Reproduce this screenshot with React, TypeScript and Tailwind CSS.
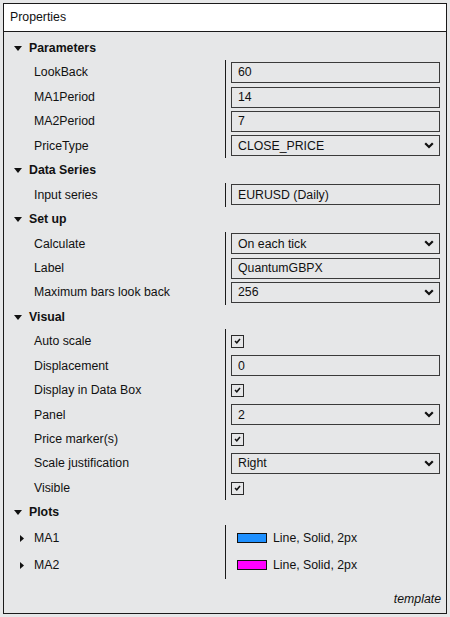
import React from "react";

type Prop =
  | { label: string; kind: "text"; value: string }
  | { label: string; kind: "select"; value: string }
  | { label: string; kind: "check" };

interface Section {
  title: string;
  props: Prop[];
}

const sections: Section[] = [
  {
    title: "Parameters",
    props: [
      { label: "LookBack", kind: "text", value: "60" },
      { label: "MA1Period", kind: "text", value: "14" },
      { label: "MA2Period", kind: "text", value: "7" },
      { label: "PriceType", kind: "select", value: "CLOSE_PRICE" },
    ],
  },
  {
    title: "Data Series",
    props: [{ label: "Input series", kind: "text", value: "EURUSD (Daily)" }],
  },
  {
    title: "Set up",
    props: [
      { label: "Calculate", kind: "select", value: "On each tick" },
      { label: "Label", kind: "text", value: "QuantumGBPX" },
      { label: "Maximum bars look back", kind: "select", value: "256" },
    ],
  },
  {
    title: "Visual",
    props: [
      { label: "Auto scale", kind: "check" },
      { label: "Displacement", kind: "text", value: "0" },
      { label: "Display in Data Box", kind: "check" },
      { label: "Panel", kind: "select", value: "2" },
      { label: "Price marker(s)", kind: "check" },
      { label: "Scale justification", kind: "select", value: "Right" },
      { label: "Visible", kind: "check" },
    ],
  },
];

const plots = [
  { name: "MA1", color: "bg-[#1e90ff]" },
  { name: "MA2", color: "bg-[#ff00ff]" },
];

function DownTriangle() {
  return (
    <svg width="8" height="5" viewBox="0 0 8 5" className="block">
      <polygon points="0,0 8,0 4,5" fill="#111" />
    </svg>
  );
}

function RightTriangle() {
  return (
    <svg width="4" height="7" viewBox="0 0 4 7" className="block">
      <polygon points="0,0 4,3.5 0,7" fill="#111" />
    </svg>
  );
}

function Chevron() {
  return (
    <svg width="10" height="7" viewBox="0 0 10 7" className="block">
      <polyline points="1.2,1.2 5,5 8.8,1.2" fill="none" stroke="#111" strokeWidth="2.2" />
    </svg>
  );
}

function CheckBox() {
  return (
    <div className="flex h-[13px] w-[13px] items-center justify-center border border-[#2a2a2a]">
      <svg width="7" height="6" viewBox="0 0 7 6" className="block">
        <polyline points="1,3 2.8,4.8 6,1" fill="none" stroke="#111" strokeWidth="1.5" />
      </svg>
    </div>
  );
}

function Value({ prop }: { prop: Prop }) {
  if (prop.kind === "check") {
    return <CheckBox />;
  }
  return (
    <div className="flex h-[21px] w-[209px] items-center justify-between border border-[#3a3a3a] pl-[6px] pr-[5px]">
      <span>{prop.value}</span>
      {prop.kind === "select" && <Chevron />}
    </div>
  );
}

function SectionHeader({ title }: { title: string }) {
  return (
    <div className="flex h-[24.45px] items-center">
      <div className="flex w-[25px] justify-end pr-[7px]">
        <DownTriangle />
      </div>
      <span className="font-bold">{title}</span>
    </div>
  );
}

export default function App() {
  return (
    <div
      className="h-[617px] w-[450px] bg-[#e6e7e8] p-[3px] text-[12.3px] text-[#111]"
      style={{ fontFamily: '"Liberation Sans", Arial, sans-serif' }}
    >
      <div className="flex h-[611px] w-[444px] flex-col border border-[#1a1a1a]">
        <div className="flex h-[28px] items-center border-b border-[#1a1a1a] bg-white pl-[6px]">
          Properties
        </div>

        <div className="flex flex-1 flex-col pt-[4px]">
          {sections.map((section) => (
            <div key={section.title}>
              <SectionHeader title={section.title} />
              {section.props.map((prop) => (
                <div key={prop.label} className="flex h-[24.45px]">
                  <div className="flex w-[221px] items-center pl-[30px]">{prop.label}</div>
                  <div className="flex flex-1 items-center border-l border-[#1a1a1a] pl-[5px]">
                    <Value prop={prop} />
                  </div>
                </div>
              ))}
            </div>
          ))}

          <SectionHeader title="Plots" />
          {plots.map((plot) => (
            <div key={plot.name} className="flex h-[27px]">
              <div className="flex w-[221px] items-center">
                <div className="flex w-[30px] justify-end pr-[10px]">
                  <RightTriangle />
                </div>
                <span>{plot.name}</span>
              </div>
              <div className="flex flex-1 items-center gap-[6px] border-l border-[#1a1a1a] pl-[11px]">
                <div className={`h-[10px] w-[30px] border border-[#111] ${plot.color}`} />
                <span>Line, Solid, 2px</span>
              </div>
            </div>
          ))}

          <div className="mt-auto flex justify-end pb-[5px] pr-[5px] italic">template</div>
        </div>
      </div>
    </div>
  );
}
